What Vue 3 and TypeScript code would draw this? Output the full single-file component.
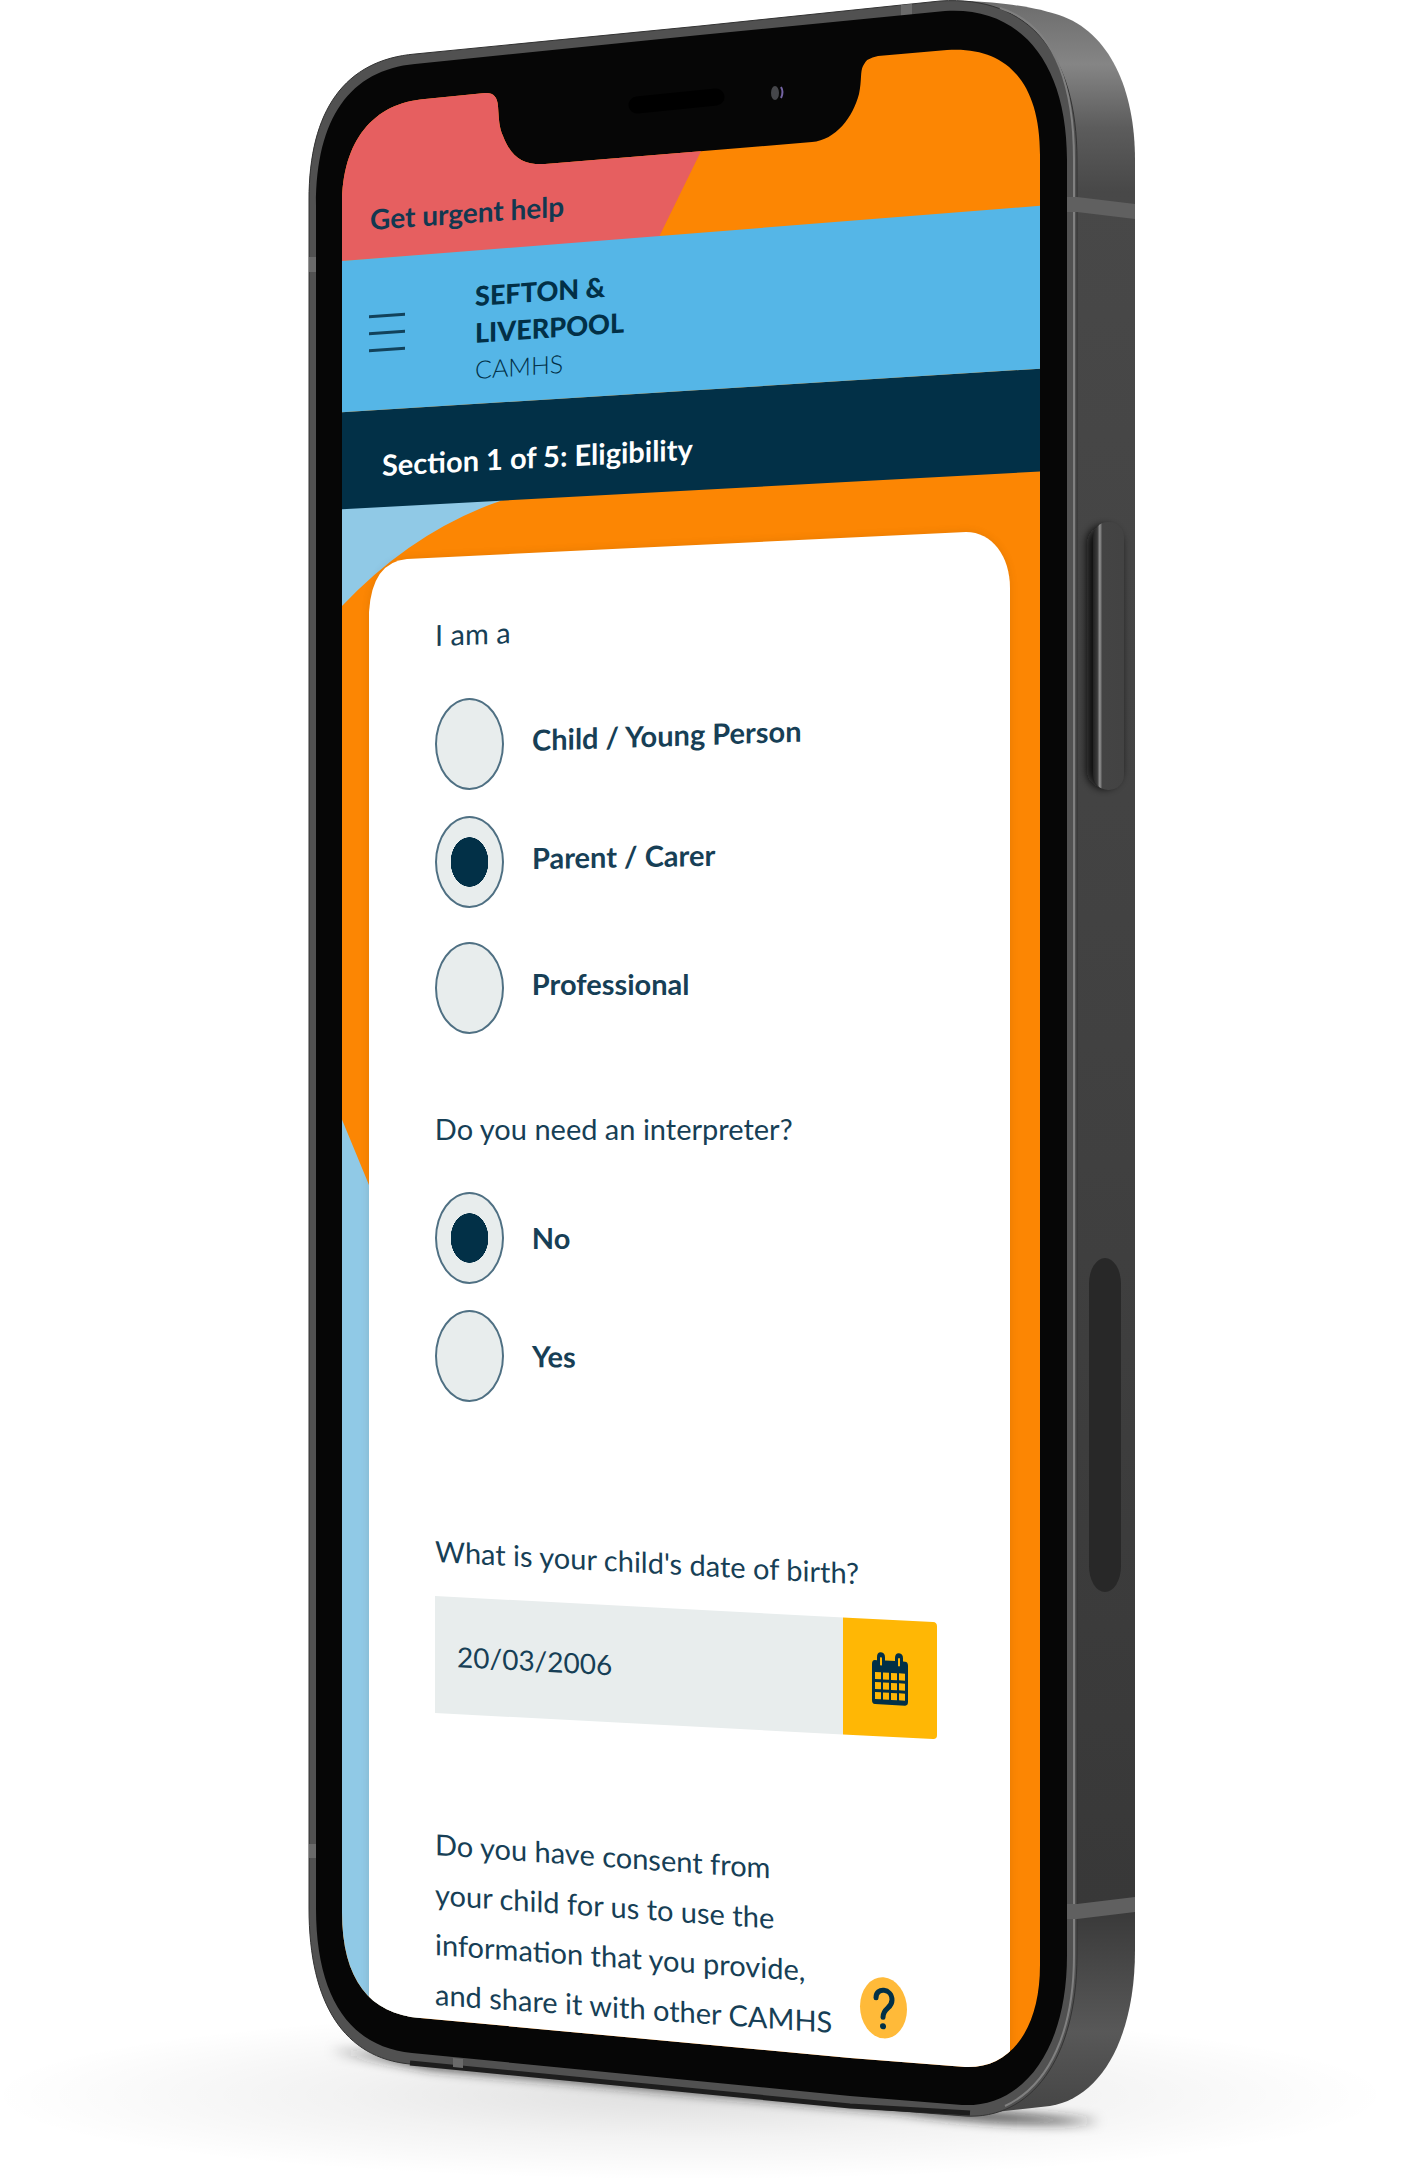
<script setup lang="ts">
import { ref } from 'vue'

interface Option {
  value: string
  label: string
  tilt: number
}

const roles: Option[] = [
  { value: 'child', label: 'Child / Young Person', tilt: -2 },
  { value: 'parent', label: 'Parent / Carer', tilt: -1 },
  { value: 'professional', label: 'Professional', tilt: 0 },
]
const answers: Option[] = [
  { value: 'no', label: 'No', tilt: 0 },
  { value: 'yes', label: 'Yes', tilt: 1 },
]

const role = ref('parent')
const interpreter = ref('no')
const birthDate = ref('20/03/2006')
</script>

<template>
  <main class="stage">
    <svg class="device" viewBox="0 0 1416 2180" aria-hidden="true">
      <defs>
        <linearGradient id="side" x1="0" y1="0" x2="0" y2="1">
          <stop offset="0" stop-color="#6c6c6c" />
          <stop offset=".03" stop-color="#858585" />
          <stop offset=".06" stop-color="#5c5c5c" />
          <stop offset=".09" stop-color="#484848" />
          <stop offset=".55" stop-color="#404040" />
          <stop offset=".9" stop-color="#383838" />
          <stop offset=".96" stop-color="#585858" />
          <stop offset="1" stop-color="#444" />
        </linearGradient>
        <linearGradient id="key" x1="0" y1="0" x2="1" y2="0">
          <stop offset="0" stop-color="#222" />
          <stop offset=".14" stop-color="#3a3a3a" />
          <stop offset=".22" stop-color="#969696" />
          <stop offset=".3" stop-color="#444" />
          <stop offset="1" stop-color="#434343" />
        </linearGradient>
        <radialGradient id="floor">
          <stop offset="0" stop-color="#000" stop-opacity=".13" />
          <stop offset=".5" stop-color="#000" stop-opacity=".05" />
          <stop offset="1" stop-color="#000" stop-opacity="0" />
        </radialGradient>
        <filter id="soft" x="-20%" y="-60%" width="140%" height="220%"><feGaussianBlur stdDeviation="6" /></filter>
        <filter id="near" x="-40%" y="-10%" width="180%" height="120%"><feGaussianBlur stdDeviation="4" /></filter>
        <clipPath id="glass">
          <path d="M342 205C342 140 374 103 425 99L485 93Q497 92 498 106C499 120 499 127 503 136C512 159 524 165 545 164L740 148L812 142C836 140 853 117 859 94C862 80 860 72 863 66Q866 58 878 56L947 50C1005 46 1040 80 1040 155V1965C1040 2030 1010 2069 965 2067L850 2058L420 2018C370 2014 342 1980 342 1912Z" />
        </clipPath>
      </defs>

      <ellipse cx="690" cy="2095" rx="700" ry="85" fill="url(#floor)" />
      <path d="M330 2050L440 2060L960 2110L1100 2121Q1020 2128 900 2111L430 2068Z" fill="#222" filter="url(#soft)" />

      <path d="M960 1C1010 2 1040 9 1059 15C1110 32 1135 90 1135 160V1950C1135 2040 1100 2098 1050 2106L960 2116Z" fill="url(#side)" />
      <rect x="1087" y="526" width="34" height="262" rx="17" fill="#111" filter="url(#near)" />
      <rect x="1093" y="522" width="31" height="268" rx="15" fill="url(#key)" />
      <rect x="1089" y="1258" width="32" height="334" rx="16" ry="26" fill="#282828" />

      <path d="M309 200C309 110 345 60 415 54L700 26L940 1C1030 -5 1077 55 1077 160V1955C1077 2060 1030 2120 965 2116L850 2107L410 2064C345 2058 309 2005 309 1908Z" fill="#515151" stroke="#333" />
      <path d="M1000 8C1050 24 1074 75 1074 160V1955C1074 2030 1050 2085 1005 2106" fill="none" stroke="#808080" stroke-width="2" />
      <path d="M410 2063L850 2106L970 2113" fill="none" stroke="#1d1d1d" stroke-width="5" />
      <path d="M309 257H317V272H309ZM309 1844H317V1858H309ZM901 5L912 4V15L901 16ZM453 2058L463 2059V2068L453 2067Z" fill="#6a6a6a" />
      <path d="M1067 197H1077L1135 204V219L1077 212H1067ZM1067 1904H1077L1135 1897V1912L1077 1919H1067Z" fill="#606060" />
      <path d="M316 205C316 118 350 70 415 64L700 35L945 11C1020 6 1067 62 1067 160V1955C1067 2052 1022 2108 962 2105L850 2096L412 2053C350 2047 316 1998 316 1908Z" fill="#060606" />

      <g clip-path="url(#glass)">
        <path d="M330 0H1050V2100H330Z" fill="#fc8603" />
        <path d="M330 0H775L659 237L330 262Z" fill="#e65f60" />
        <path d="M330 490H530L503 500Q414 530 342 606H330Z" fill="#90c9e6" />
        <path d="M330 1091L343 1122L369 1185L420 1300V2100H330Z" fill="#90c9e6" />
        <path d="M330 413L1050 368V471L330 510Z" fill="#023047" />
        <path d="M330 262L1050 205V368L330 413Z" fill="#55b6e7" />
        <path d="M369 612Q372 562 407 559L966 532C992 532 1010 556 1010 588V2100H369Z" fill="#432000" opacity=".12" filter="url(#near)" />
        <path d="M369 612Q372 562 407 559L966 532C992 532 1010 556 1010 588V2100H369Z" fill="#fff" />
      </g>

      <path d="M637 105L716 97" stroke="#000" stroke-width="17" stroke-linecap="round" />
      <ellipse cx="775" cy="93" rx="4" ry="7" fill="#45464a" />
      <path d="M781 87Q784 92 781 98" fill="none" stroke="#7464a3" stroke-width="2" />
    </svg>

    <div class="screen">
      <a class="urgent" href="#help">Get urgent help</a>
      <header class="header">
        <button class="menu" type="button" aria-label="Open menu"><i></i><i></i><i></i></button>
        <a class="logo" href="#home">
          <span>SEFTON &amp;</span>
          <span>LIVERPOOL</span>
          <span class="light">CAMHS</span>
        </a>
      </header>
      <h1 class="section">Section 1 of 5: Eligibility</h1>

      <form class="form" @submit.prevent>
        <fieldset class="group roles">
          <legend class="question">I am a</legend>
          <label v-for="o in roles" :key="o.value" class="option">
            <input v-model="role" type="radio" name="role" :value="o.value" />
            <span :style="{ transform: `skewY(${o.tilt}deg)` }">{{ o.label }}</span>
          </label>
        </fieldset>

        <fieldset class="group">
          <legend class="question level">Do you need an interpreter?</legend>
          <label v-for="o in answers" :key="o.value" class="option">
            <input v-model="interpreter" type="radio" name="interpreter" :value="o.value" />
            <span :style="{ transform: `skewY(${o.tilt}deg)` }">{{ o.label }}</span>
          </label>
        </fieldset>

        <div class="birth">
          <label class="question" for="birth">What is your child's date of birth?</label>
          <div class="date">
            <input id="birth" v-model="birthDate" type="text" />
            <button type="button" aria-label="Choose a date">
              <svg viewBox="0 0 38 54" width="38" height="54" aria-hidden="true">
                <path d="M4 9H6V6Q6 1 10 1T14 6V9H24V6Q24 1 28 1T32 6V9H34Q37 9 37 13V49Q37 53 34 53H4Q1 53 1 49V13Q1 9 4 9Z" fill="#023047" />
                <path d="M10 6V14M28 6V14" stroke="#ffb705" stroke-width="2" />
                <path d="M4 21h6v7h-6zM12 21h6v7h-6zM20 21h6v7h-6zM28 21h6v7h-6zM4 31h6v7h-6zM12 31h6v7h-6zM20 31h6v7h-6zM28 31h6v7h-6zM4 41h6v7h-6zM12 41h6v7h-6zM20 41h6v7h-6zM28 41h6v7h-6z" fill="#ffb705" />
              </svg>
            </button>
          </div>
        </div>

        <div class="consent">
          <p>
            Do you have consent from<br />
            your child for us to use the<br />
            information that you provide,<br />
            and share it with other CAMHS
          </p>
          <button type="button" aria-label="Why we ask for consent">
            <svg viewBox="0 0 24 44" width="24" height="44" aria-hidden="true">
              <path d="M4 12C4 1 20 1 20 13C20 22 11 21 11 31" fill="none" stroke="#023047" stroke-width="5" stroke-linecap="round" />
              <circle cx="11" cy="40" r="3" fill="#023047" />
            </svg>
          </button>
        </div>
      </form>
    </div>
  </main>
</template>

<style>
body {
  margin: 0;
  background: #fff;
}
</style>

<style scoped>
.stage {
  display: grid;
  max-width: 1416px;
  margin: 0 auto;
  overflow: hidden;
  color: #173f56;
  font-family: Lato, "Open Sans", sans-serif;
  font-size: 29px;
  line-height: 50px;
}
.device {
  grid-area: 1 / 1;
  display: block;
  width: 100%;
  height: auto;
}
.screen {
  grid-area: 1 / 1;
  display: flex;
  flex-direction: column;
  align-items: flex-start;
  width: 50%;
  margin-left: 24%;
  padding-top: 199px;
  box-sizing: border-box;
}
.urgent {
  margin-left: 30px;
  color: #123850;
  font-size: 28px;
  font-weight: 700;
  line-height: 40px;
  text-decoration: none;
  transform: skewY(-4deg);
  transform-origin: left bottom;
}
.header {
  display: flex;
  align-items: center;
  gap: 70px;
  margin: 38px 0 0 29px;
}
.menu {
  display: flex;
  flex-direction: column;
  gap: 14px;
  width: 36px;
  padding: 0;
  border: 0;
  background: none;
  transform: skewY(-4deg);
}
.menu i {
  height: 3px;
  background: #12425b;
}
.logo {
  display: flex;
  flex-direction: column;
  color: #023047;
  font-size: 27px;
  font-weight: 900;
  line-height: 37px;
  text-decoration: none;
  transform: skewY(-4deg);
  transform-origin: left bottom;
}
.logo .light {
  font-size: 25px;
  font-weight: 300;
}
.section {
  margin: 52px 0 0 42px;
  color: #fff;
  font-size: 29px;
  font-weight: 700;
  line-height: 50px;
  transform: skewY(-3deg);
  transform-origin: left bottom;
}
.form {
  display: flex;
  flex-direction: column;
  width: 504px;
  margin: 120px 0 0 95px;
}
.group {
  display: flex;
  flex-direction: column;
  gap: 26px;
  min-width: 0;
  margin: 0;
  padding: 0;
  border: 0;
}
.group + .group {
  margin-top: 70px;
}
.question {
  align-self: flex-start;
  display: block;
  padding: 0;
  transform: skewY(-2deg);
  transform-origin: left bottom;
}
.group .question {
  margin-bottom: 38px;
}
.group .question.level {
  transform: none;
}
.option {
  display: flex;
  align-items: center;
  gap: 28px;
  font-weight: 700;
}
.option span {
  transform-origin: left bottom;
}
.roles .option span {
  padding-bottom: 8px;
}
.roles .option:last-child {
  margin-top: 8px;
}
.option input {
  flex: none;
  width: 69px;
  height: 92px;
  margin: 0;
  border: 2px solid #4f7083;
  border-radius: 50%;
  background: #e8eded;
  appearance: none;
}
.option input:checked {
  background: radial-gradient(19px 25px, #023047 98%, #e8eded 100%);
}
.birth {
  display: flex;
  flex-direction: column;
  gap: 20px;
  margin-top: 124px;
}
.birth .question {
  transform: skewY(3deg);
}
.date {
  display: flex;
  height: 117px;
  transform: skewY(3deg);
  transform-origin: left bottom;
}
.date input {
  width: 408px;
  box-sizing: border-box;
  padding: 0 22px;
  border: 0;
  background: #e8eded;
  color: #173f56;
  font: inherit;
  font-size: 28px;
}
.date button {
  display: grid;
  place-items: center;
  width: 94px;
  padding: 0;
  border: 0;
  border-radius: 0 4px 4px 0;
  background: #ffb705;
}
.consent {
  display: flex;
  align-items: flex-end;
  margin-top: 106px;
  transform: skewY(4deg);
  transform-origin: left bottom;
}
.consent p {
  width: 400px;
  margin: 0 25px 0 0;
  white-space: nowrap;
}
.consent button {
  display: grid;
  place-items: center;
  width: 47px;
  height: 61px;
  margin-bottom: 12px;
  padding: 0;
  border: 0;
  border-radius: 50%;
  background: #ffba39;
}
</style>
